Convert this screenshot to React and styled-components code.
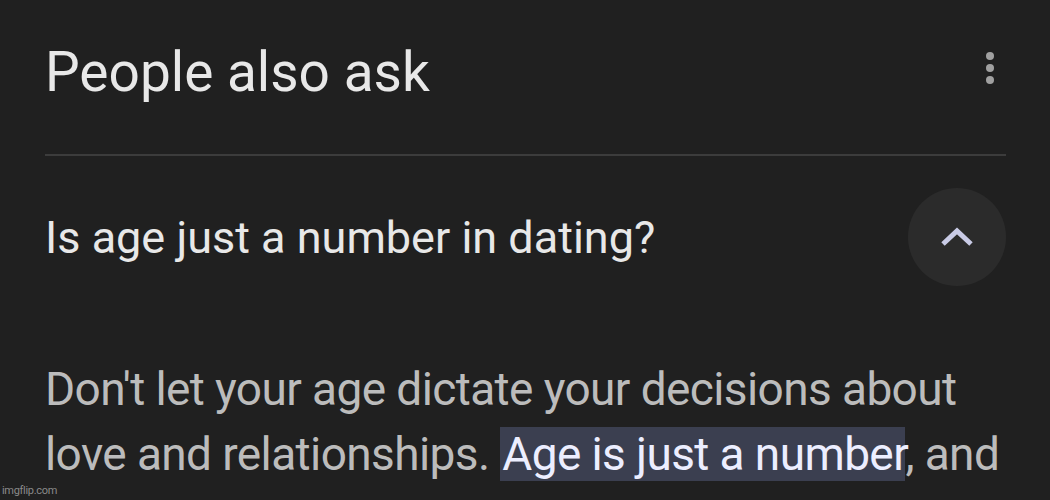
import React from 'react'
import styled, { createGlobalStyle } from 'styled-components'

const Global = createGlobalStyle`
    html, body {
        margin: 0;
        padding: 0;
        background: #202020;
    }
    body {
        width: 1050px;
        height: 500px;
        overflow: hidden;
        font-family: Roboto, "Open Sans", sans-serif;
    }
`

const Page = styled.div`
    position: relative;
    width: 1050px;
    height: 500px;
    box-sizing: border-box;
    padding: 0 44px 0 45px;
    background: #202020;
`

const Header = styled.div`
    display: flex;
    align-items: flex-start;
    justify-content: space-between;
    height: 156px;
    border-bottom: 2px solid #3c3c3c;
    box-sizing: border-box;
`

const Title = styled.h2`
    margin: 40px 0 0;
    font-size: 55px;
    line-height: 64px;
    font-weight: 400;
    color: #e8e8e8;
`

const MenuDots = styled.div`
    display: flex;
    flex-direction: column;
    gap: 4px;
    margin: 52px 12px 0 0;
`

const Dot = styled.span`
    width: 8px;
    height: 8px;
    border-radius: 50%;
    background: #a0a0a0;
`

const QuestionRow = styled.div`
    display: flex;
    align-items: center;
    justify-content: space-between;
    height: 166px;
    padding-bottom: 4px;
    box-sizing: border-box;
`

const Question = styled.div`
    font-size: 45px;
    color: #e8e8e8;
`

const Toggle = styled.div`
    width: 98px;
    height: 98px;
    border-radius: 50%;
    background: #2b2b2b;
    display: flex;
    align-items: center;
    justify-content: center;
`

const Answer = styled.p`
    margin: 35px 0 0;
    font-size: 46px;
    line-height: 65px;
    color: #bcbcbc;
    letter-spacing: -0.6px;
`

const Mark = styled.span`
    background: #3b3f50;
    color: #eceeff;
    padding: 0 0 0 2px;
`

const Watermark = styled.div`
    position: absolute;
    left: 2px;
    bottom: 3px;
    font-size: 11px;
    color: #8a8a8a;
    letter-spacing: -0.3px;
`

const App = () => {
    return (
        <Page>
            <Global />

            <Header>
                <Title>People also ask</Title>
                <MenuDots>
                    <Dot />
                    <Dot />
                    <Dot />
                </MenuDots>
            </Header>

            <QuestionRow>
                <Question>Is age just a number in dating?</Question>
                <Toggle>
                    <svg width="34" height="22" viewBox="0 0 34 22">
                        <path d="M3 18 L17 5 L31 18" fill="none" stroke="#c9cbe6" strokeWidth="5" />
                    </svg>
                </Toggle>
            </QuestionRow>

            <Answer>
                Don't let your age dictate your decisions about love and relationships. <Mark>Age is just a number</Mark>, and
            </Answer>

            <Watermark>imgflip.com</Watermark>
        </Page>
    )
}

export default App
